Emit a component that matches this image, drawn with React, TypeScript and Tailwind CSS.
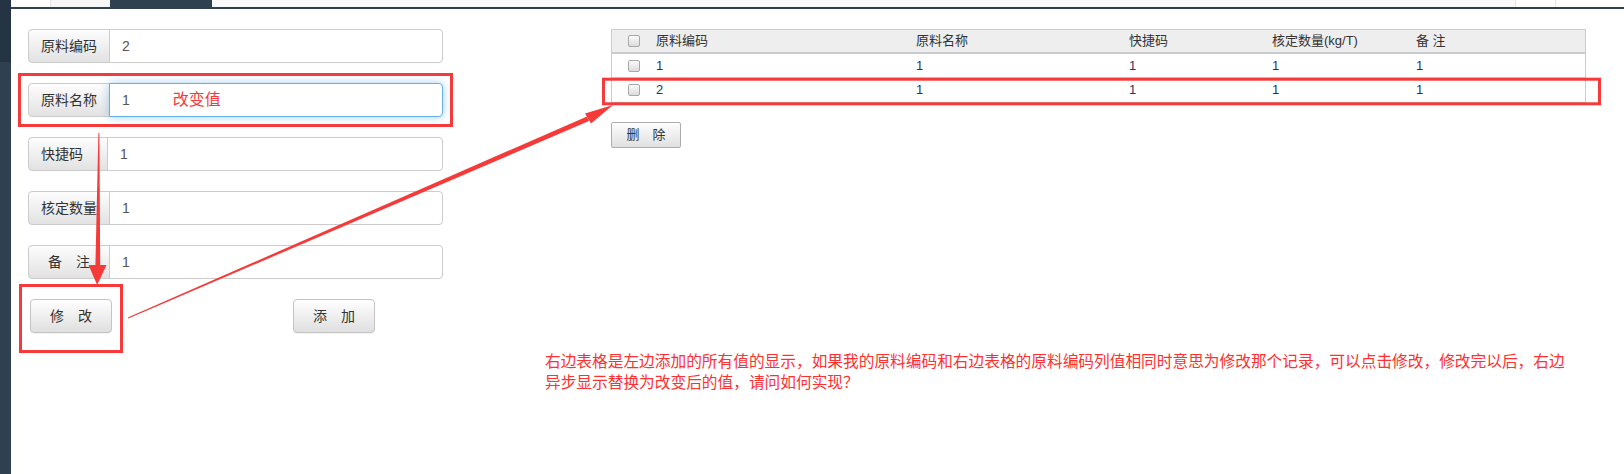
import React from "react";

const FONT = "font-['Liberation_Sans','Noto_Sans_CJK_SC',sans-serif]";

function Field({
  label,
  children,
  labelW = "w-[82px]",
  center = false,
  focused = false,
}: {
  label: string;
  children: React.ReactNode;
  labelW?: string;
  center?: boolean;
  focused?: boolean;
}) {
  return (
    <div className="flex h-[34px] w-[415px]">
      <div
        className={`flex shrink-0 items-center ${center ? "justify-center" : ""} ${labelW} overflow-hidden whitespace-nowrap rounded-l-[4px] border border-[#ccc] bg-linear-to-b from-[#fdfdfd] to-[#e2e2e2] px-3 text-[14px] text-[#333]`}
      >
        {label}
      </div>
      <div
        className={`-ml-px flex flex-1 items-center rounded-r-[4px] border bg-white pl-3 text-[14px] text-[#555] ${
          focused
            ? "relative z-10 border-[#66afe9] shadow-[0_0_8px_rgba(102,175,233,0.6)]"
            : "border-[#ccc]"
        }`}
      >
        {children}
      </div>
    </div>
  );
}

function Btn({ children, w = "w-[82px]", className = "" }: { children: React.ReactNode; w?: string; className?: string }) {
  return (
    <div
      className={`flex h-[34px] ${w} items-center justify-center rounded-[4px] border border-[#c4c4c4] bg-linear-to-b from-[#ffffff] to-[#dfdfdf] text-[14px] text-[#333] shadow-[0_1px_1px_rgba(0,0,0,0.06)] ${className}`}
    >
      {children}
    </div>
  );
}

function Check() {
  return (
    <span className="block h-[12px] w-[12px] rounded-[2px] border border-[#a8a8a8] bg-linear-to-b from-[#fbfbfb] to-[#dcdcdc]" />
  );
}

const COLS = "grid grid-cols-[44px_260px_213px_143px_144px_1fr] items-center";

function Row({ cells, last = false }: { cells: string[]; last?: boolean }) {
  return (
    <div className={`${COLS} h-[24px] text-[13px] text-[#2b3060] ${last ? "" : "border-b border-[#ddd]"}`}>
      <div className="pl-[16px]">
        <Check />
      </div>
      {cells.map((c, i) => (
        <div key={i}>{c}</div>
      ))}
    </div>
  );
}

export default function App() {
  return (
    <div className={`relative flex h-[474px] w-[1624px] overflow-hidden bg-white ${FONT}`}>
      {/* sidebar */}
      <aside className="flex w-[11px] shrink-0 flex-col">
        <div className="h-[62px] bg-[#253443]" />
        <div className="flex-1 bg-[#2f4050]" />
      </aside>

      <main className="flex flex-1 flex-col">
        {/* tab strip */}
        <div className="flex h-[7px] bg-[#fafafa]">
          <div className="w-[39px] bg-white" />
          <div className="w-[60px] border-l border-[#e6e6e6] bg-[#f6f6f6]" />
          <div className="w-[102px] bg-[#2f4050]" />
          <div className="flex-1" />
          <div className="w-[40px] border-l border-[#e6e6e6] bg-white" />
          <div className="w-[69px] border-l border-[#e6e6e6] bg-white" />
        </div>
        <div className="h-[2px] bg-[#2f4050]" />

        {/* content */}
        <div className="flex pl-[17px] pt-[20px]">
          {/* left form */}
          <div className="flex w-[415px] flex-col">
            <div className="flex flex-col gap-[20px]">
              <Field label="原料编码">2</Field>
              <Field label="原料名称" focused>
                <span>1</span>
                <span className="ml-[43px] text-[16px] text-[#f63a3a]">改变值</span>
              </Field>
              <Field label="快捷码" labelW="w-[80px]">
                1
              </Field>
              <Field label="核定数量">1</Field>
              <Field label="备　注" center>
                1
              </Field>
            </div>
            <div className="mt-[20px] flex">
              <Btn className="ml-[2px]">修　改</Btn>
              <Btn className="ml-[181px]">添　加</Btn>
            </div>
          </div>

          {/* right table */}
          <div className="ml-[168px] flex w-[975px] flex-col">
            <div className="border border-[#ccc] bg-white">
              <div className={`${COLS} h-[24px] border-b-2 border-[#ccc] bg-[#eeeeee] text-[13px] text-[#333]`}>
                <div className="pl-[16px]">
                  <Check />
                </div>
                <div>原料编码</div>
                <div>原料名称</div>
                <div>快捷码</div>
                <div>核定数量(kg/T)</div>
                <div>备 注</div>
              </div>
              <Row cells={["1", "1", "1", "1", "1"]} />
              <Row cells={["2", "1", "1", "1", "1"]} last />
            </div>
            <div className="mt-[19px] flex">
              <div className="flex h-[26px] w-[70px] items-center justify-center rounded-[2px] border border-[#adadad] bg-linear-to-b from-[#fdfdfd] to-[#e0e0e0] text-[13px] text-[#333]">
                删　除
              </div>
            </div>
          </div>
        </div>

        {/* question */}
        <div className="mt-[18px] pl-[534px] text-[15.7px] leading-[21px] text-[#ff3030] whitespace-nowrap">
          <div>
            右边表格是左边添加的所有值的显示，如果我的原料编码和右边表格的原料编码列值相同时意思为修改那个记录，可以点击修改，修改完以后，右边
          </div>
          <div>异步显示替换为改变后的值，请问如何实现？</div>
        </div>
      </main>

      {/* annotation overlay */}
      <svg
        className="pointer-events-none absolute left-0 top-0"
        width="1624"
        height="474"
        viewBox="0 0 1624 474"
      >
        <g fill="none" stroke="#f63a3a" strokeWidth="3">
          <rect x="19.5" y="74.5" width="432" height="51" />
          <rect x="20.5" y="285.5" width="101" height="66" />
          <rect x="603.5" y="79.2" width="996" height="24.6" />
        </g>
        <g fill="#f63a3a">
          {/* down arrow */}
          <polygon points="98.4,133 99.4,133 100.2,266 95.4,266" />
          <polygon points="88.5,265 106.5,265 97.2,285" />
          {/* diagonal arrow */}
          <polygon points="127.8,317.4 128.3,318.6 589,121 587,116.4" />
          <polygon points="585,113.5 613,105 591,123.5" />
        </g>
      </svg>
    </div>
  );
}
